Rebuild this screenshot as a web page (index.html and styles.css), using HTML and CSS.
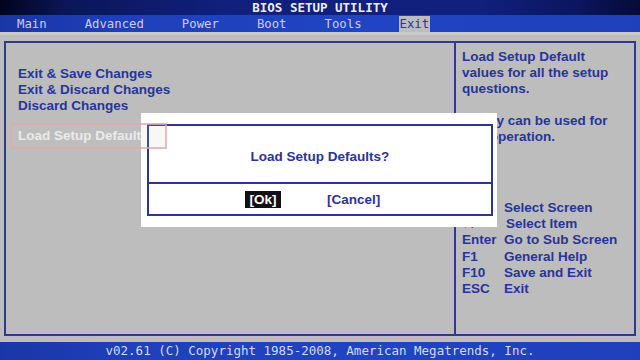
FILE: index.html
```html
<!DOCTYPE html>
<html lang="en">
<head>
    <meta charset="UTF-8">
    <meta name="viewport" content="width=device-width, initial-scale=1.0">
    <title>BIOS Setup Utility</title>
    <link rel="stylesheet" href="styles.css">
</head>
<body>

<div class="screen">
    <div class="title-bar">BIOS SETUP UTILITY</div>
    <div class="tab-bar">
        <span class="tab">Main</span>
        <span class="tab">Advanced</span>
        <span class="tab">Power</span>
        <span class="tab">Boot</span>
        <span class="tab">Tools</span>
        <span class="tab active">Exit</span>
    </div>

    <div class="main">
        <div class="frame">
            <div class="menu">
                <div class="item">Exit &amp; Save Changes</div>
                <div class="item">Exit &amp; Discard Changes</div>
                <div class="item">Discard Changes</div>
                <div class="item selected">Load Setup Defaults</div>
            </div>

            <div class="help">
                <p>Load Setup Default<br>values for all the setup<br>questions.</p>
                <p>F9 key can be used for<br>this operation.</p>

                <div class="keys">
                    <span class="key">&larr;&rarr;</span><span>Select Screen</span>
                    <span class="key">&uarr;&darr;</span><span class="indent">Select Item</span>
                    <span class="key">Enter</span><span>Go to Sub Screen</span>
                    <span class="key">F1</span><span>General Help</span>
                    <span class="key">F10</span><span>Save and Exit</span>
                    <span class="key">ESC</span><span>Exit</span>
                </div>
            </div>
        </div>
    </div>

    <div class="footer">v02.61 (C) Copyright 1985-2008, American Megatrends, Inc.</div>

    <!-- Dialogo de confirmacao -->
    <div class="dialog">
        <div class="dialog-box">
            <div class="dialog-title">Load Setup Defaults?</div>
            <div class="dialog-buttons">
                <span class="btn focus">[Ok]</span>
                <span class="btn">[Cancel]</span>
            </div>
        </div>
    </div>
</div>

</body>
</html>
```

FILE: styles.css
```css
body {
    margin: 0;
    padding: 0;
    background-color: #bdbdbd;
    font-family: "Liberation Sans", Arial, sans-serif;
}
.screen {
    position: relative;
    width: 640px;
    height: 360px;
    overflow: hidden;
    display: flex;
    flex-direction: column;
}
.title-bar {
    height: 15px;
    line-height: 15px;
    text-align: center;
    font-family: "DejaVu Sans Mono", monospace;
    font-size: 12.5px;
    font-weight: bold;
    color: #ececf4;
    background: linear-gradient(to right, #02041c 0%, #0a1658 10%, #10207c 35%, #10207c 75%, #0a1660 90%, #060b38 100%);
}
.tab-bar {
    height: 17px;
    display: flex;
    align-items: flex-end;
    gap: 36px;
    padding-left: 16px;
    font-family: "DejaVu Sans Mono", monospace;
    font-size: 12.3px;
    color: #c9cdea;
    background: linear-gradient(to right, #1a36a6 0%, #1e40ba 20%, #2144c4 60%, #1e40ba 100%);
}
.tab {
    height: 16px;
    line-height: 16px;
    padding: 0 1px;
}
.tab.active {
    background-color: #bcbcc2;
    color: #2a3896;
}
.main {
    flex: 1;
    padding: 6px 4px 0 4px;
    border-top: 3px solid #c9c9c9;
}
.frame {
    height: 295px;
    box-sizing: border-box;
    border: 2px solid #2f3a8e;
    display: grid;
    grid-template-columns: 448px 1fr;
    font-weight: bold;
    font-size: 13.5px;
    line-height: 16px;
    color: #28349a;
}
.menu {
    padding: 23px 0 0 12px;
}
.item.selected {
    position: relative;
    margin-top: 14px;
    color: #f0f0f0;
}
.item.selected::after {
    content: "";
    position: absolute;
    left: -8px;
    top: -5px;
    width: 153px;
    height: 22px;
    border: 2px solid rgba(222, 170, 170, 0.75);
    background-color: rgba(210, 200, 200, 0.15);
    z-index: 3;
}
.help {
    border-left: 2px solid #2f3a8e;
    padding: 6px 0 0 6px;
}
.help p {
    margin: 0 0 16px 0;
}
.keys {
    margin-top: 55px;
    display: grid;
    grid-template-columns: 42px 1fr;
    line-height: 16.2px;
}
.indent {
    padding-left: 2px;
}
.footer {
    height: 18px;
    line-height: 18px;
    text-align: center;
    font-family: "DejaVu Sans Mono", monospace;
    font-size: 12.5px;
    color: #d6d8ea;
    background: linear-gradient(to right, #1a36a6 0%, #1e40ba 20%, #2144c4 60%, #1e40ba 100%);
}
.dialog {
    position: absolute;
    left: 141px;
    top: 113px;
    width: 356px;
    height: 114px;
    box-sizing: border-box;
    padding: 11px 4px 11px 6px;
    background-color: #ffffff;
    z-index: 2;
}
.dialog-box {
    height: 100%;
    box-sizing: border-box;
    border: 2px solid #2c3590;
    display: flex;
    flex-direction: column;
    font-weight: bold;
    font-size: 13.5px;
    line-height: 16px;
    color: #28349a;
}
.dialog-title {
    height: 58px;
    box-sizing: border-box;
    padding-top: 23px;
    text-align: center;
    border-bottom: 2px solid #2c3590;
}
.dialog-buttons {
    flex: 1;
    display: flex;
    align-items: center;
    gap: 46px;
    padding-left: 96px;
}
.btn {
    height: 17px;
    line-height: 17px;
}
.btn.focus {
    background-color: #111111;
    color: #ffffff;
    padding: 0 4.5px;
}
```
